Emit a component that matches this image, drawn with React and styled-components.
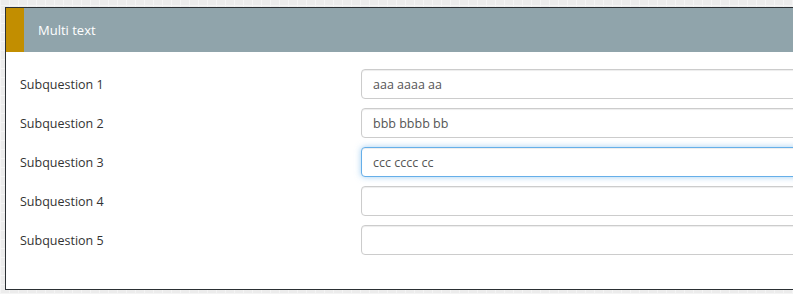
import React, { useEffect, useRef } from "react";
import styled, { createGlobalStyle } from "styled-components";

const Global = createGlobalStyle`
  html, body { margin: 0; padding: 0; overflow: hidden; }
  body {
    background-color: #ececec;
    background-image:
      repeating-linear-gradient(90deg, #f4f4f4 0 1px, transparent 1px 9px),
      repeating-linear-gradient(0deg, #f4f4f4 0 1px, transparent 1px 9px);
    font-family: "Open Sans", "Noto Sans", sans-serif;
  }
`;

const Page = styled.div`
  padding: 7px 0 0 5px;
  width: 793px;
  height: 294px;
  box-sizing: border-box;
  overflow: hidden;
`;

const Panel = styled.section`
  width: 820px;
  border: 1px solid #2b3034;
  background: #fff;
  box-sizing: border-box;
`;

const Header = styled.header`
  display: flex;
  align-items: center;
  height: 44px;
  background: #90a4ab;
`;

const Accent = styled.div`
  width: 18px;
  align-self: stretch;
  background: #c28e00;
`;

const Title = styled.h2`
  margin: 0 0 0 14px;
  font-size: 13px;
  font-weight: 400;
  color: #fff;
  line-height: 1;
`;

const Body = styled.div`
  display: flex;
  flex-direction: column;
  gap: 9px;
  padding: 17px 0 34px 14px;
`;

const Row = styled.div`
  display: grid;
  grid-template-columns: 341px 1fr;
  align-items: center;
`;

const Label = styled.label`
  font-size: 12.5px;
  color: #333;
`;

const Input = styled.input`
  height: 30px;
  box-sizing: border-box;
  width: 100%;
  border: 1px solid ${(p) => (p.$focused ? "#66afe9" : "#ccc")};
  border-radius: 4px;
  padding: 0 11px;
  font-family: "Open Sans", "Noto Sans", sans-serif;
  font-size: 12.5px;
  color: #555;
  background: #fff;
  outline: none;
  caret-color: #222;
  box-shadow: ${(p) =>
    p.$focused
      ? "inset 0 1px 1px rgba(0,0,0,.075), 0 0 6px rgba(102,175,233,.6)"
      : "inset 0 1px 1px rgba(0,0,0,.075)"};
`;

const rows = [
  { label: "Subquestion 1", value: "aaa aaaa aa" },
  { label: "Subquestion 2", value: "bbb bbbb bb" },
  { label: "Subquestion 3", value: "ccc cccc cc", focused: true },
  { label: "Subquestion 4", value: "" },
  { label: "Subquestion 5", value: "" },
];

export default function App() {
  const focusRef = useRef(null);
  useEffect(() => {
    const el = focusRef.current;
    if (el) {
      el.focus({ preventScroll: true });
      const l = el.value.length;
      el.setSelectionRange(l, l);
    }
  }, []);
  return (
    <>
      <Global />
      <Page>
        <Panel>
          <Header>
            <Accent />
            <Title>Multi text</Title>
          </Header>
          <Body>
            {rows.map((r, i) => (
              <Row key={i}>
                <Label htmlFor={`sq${i}`}>{r.label}</Label>
                <Input
                  id={`sq${i}`}
                  defaultValue={r.value}
                  $focused={r.focused}
                  ref={r.focused ? focusRef : undefined}
                />
              </Row>
            ))}
          </Body>
        </Panel>
      </Page>
    </>
  );
}
